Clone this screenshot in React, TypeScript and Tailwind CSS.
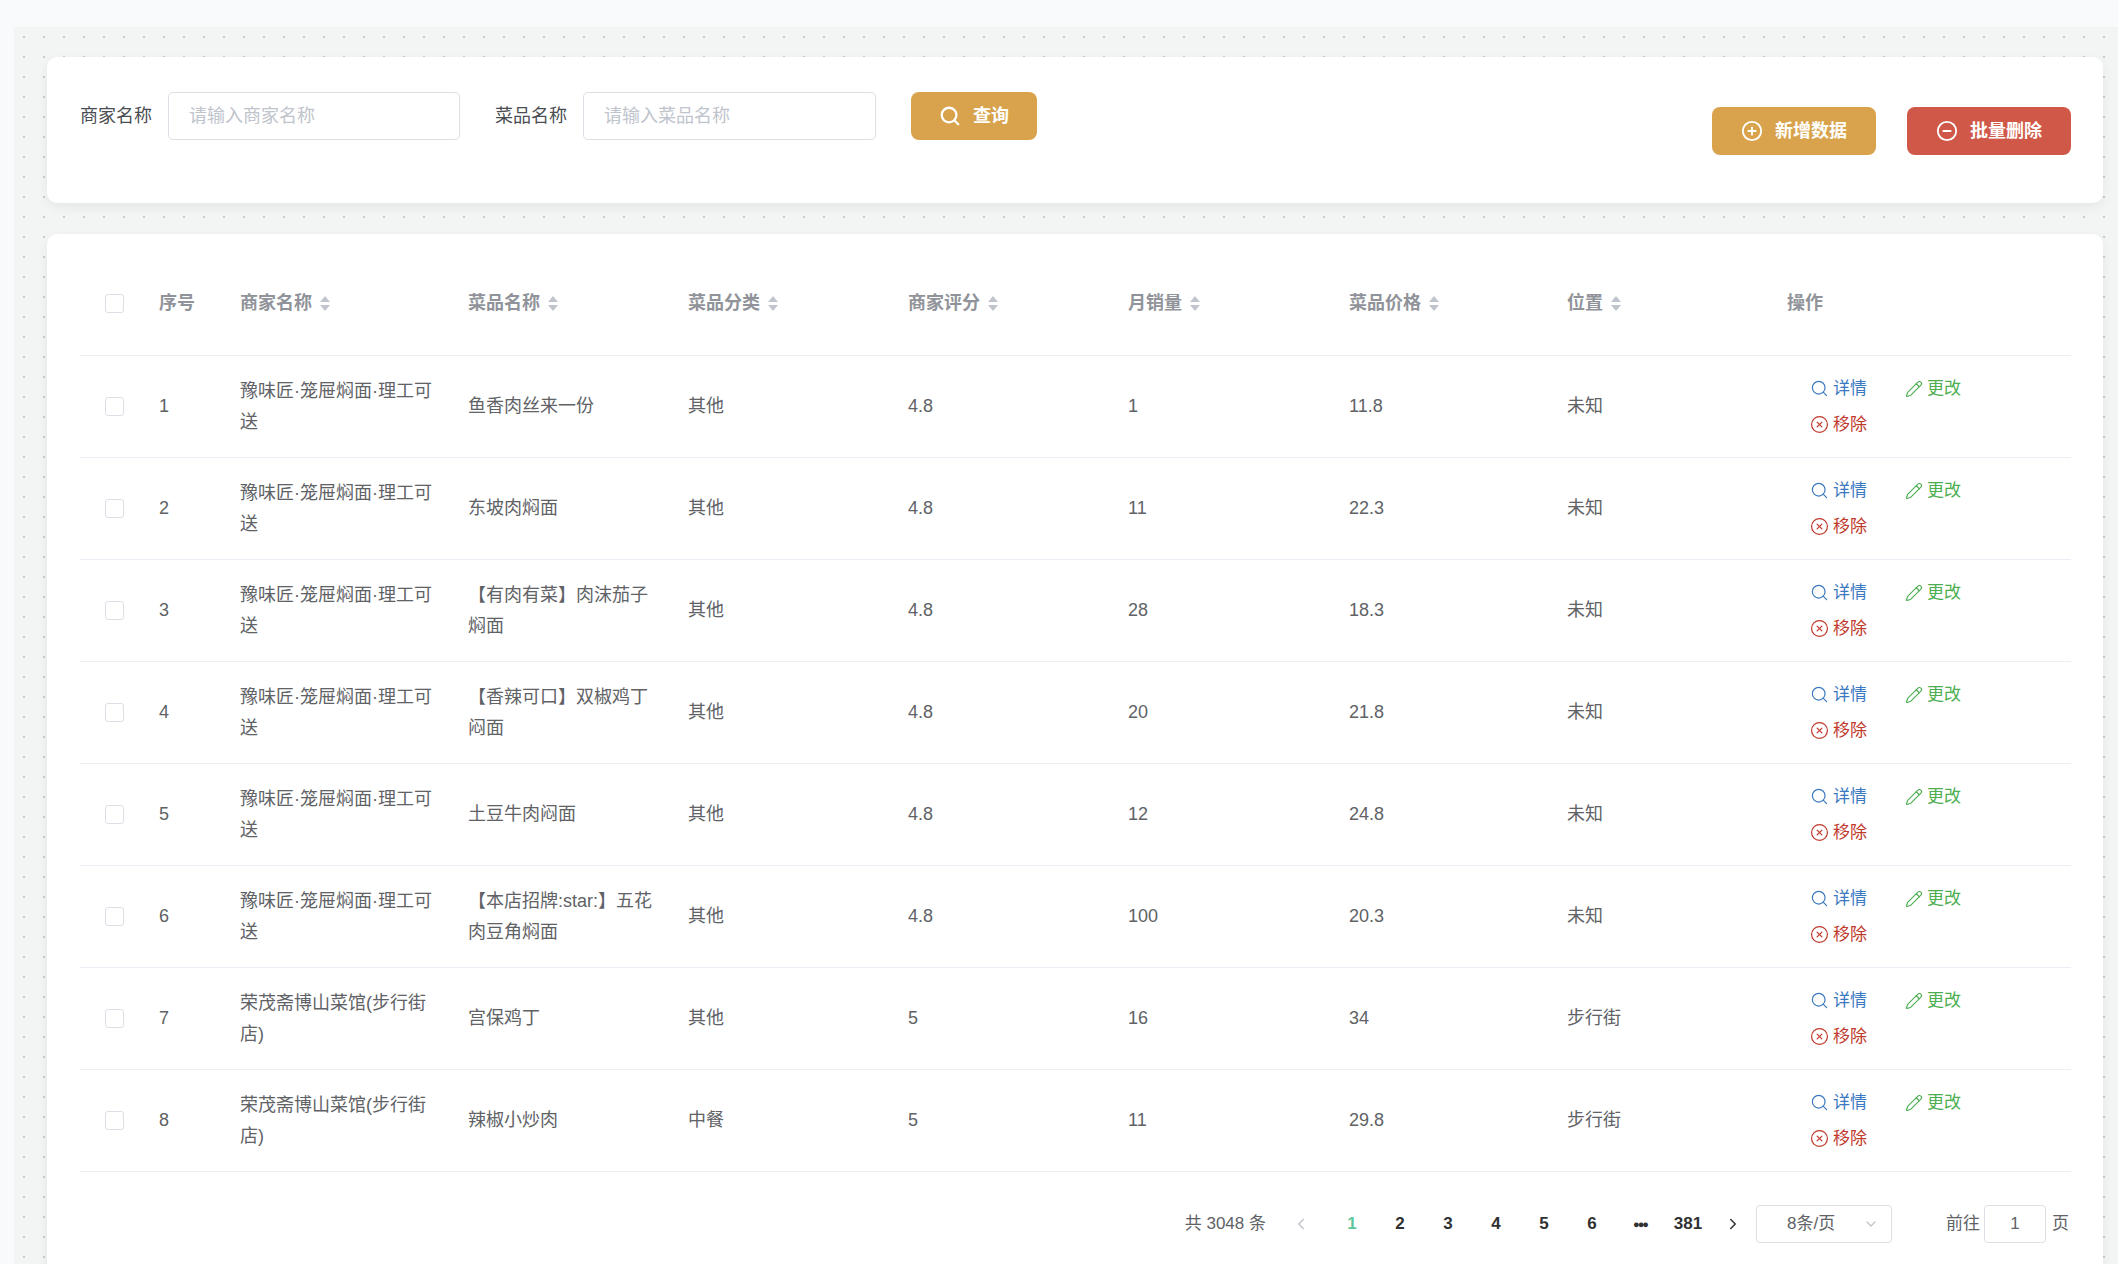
import { Search, CirclePlus, CircleMinus, CircleX, Pencil, ChevronLeft, ChevronRight, ChevronDown } from "lucide-react";

const rows = [
  { id: 1, shop: "豫味匠·笼屉焖面·理工可送", dish: "鱼香肉丝来一份", cat: "其他", score: "4.8", sales: "1", price: "11.8", loc: "未知" },
  { id: 2, shop: "豫味匠·笼屉焖面·理工可送", dish: "东坡肉焖面", cat: "其他", score: "4.8", sales: "11", price: "22.3", loc: "未知" },
  { id: 3, shop: "豫味匠·笼屉焖面·理工可送", dish: "【有肉有菜】肉沫茄子焖面", cat: "其他", score: "4.8", sales: "28", price: "18.3", loc: "未知" },
  { id: 4, shop: "豫味匠·笼屉焖面·理工可送", dish: "【香辣可口】双椒鸡丁闷面", cat: "其他", score: "4.8", sales: "20", price: "21.8", loc: "未知" },
  { id: 5, shop: "豫味匠·笼屉焖面·理工可送", dish: "土豆牛肉闷面", cat: "其他", score: "4.8", sales: "12", price: "24.8", loc: "未知" },
  { id: 6, shop: "豫味匠·笼屉焖面·理工可送", dish: "【本店招牌:star:】五花肉豆角焖面", cat: "其他", score: "4.8", sales: "100", price: "20.3", loc: "未知" },
  { id: 7, shop: "荣茂斋博山菜馆(步行街店)", dish: "宫保鸡丁", cat: "其他", score: "5", sales: "16", price: "34", loc: "步行街" },
  { id: 8, shop: "荣茂斋博山菜馆(步行街店)", dish: "辣椒小炒肉", cat: "中餐", score: "5", sales: "11", price: "29.8", loc: "步行街" },
];

const headers = [
  { t: "商家名称", w: "w-[228px]" },
  { t: "菜品名称", w: "w-[220px]" },
  { t: "菜品分类", w: "w-[220px]" },
  { t: "商家评分", w: "w-[220px]" },
  { t: "月销量", w: "w-[221px]" },
  { t: "菜品价格", w: "w-[218px]" },
  { t: "位置", w: "w-[220px]" },
];

function Sort() {
  return (
    <span className="inline-flex flex-col ml-2 gap-[3px]">
      <span className="w-0 h-0 border-x-[5px] border-x-transparent border-b-[6px] border-b-[#c0c4cc]" />
      <span className="w-0 h-0 border-x-[5px] border-x-transparent border-t-[6px] border-t-[#c0c4cc]" />
    </span>
  );
}

function Box() {
  return <span className="block w-[19px] h-[19px] border border-[#dcdfe6] rounded-[3px] bg-white" />;
}

export default function App() {
  return (
    <div className="w-[2118px] h-[1264px] bg-[#f8fafc] pt-[27px] pl-[14px] overflow-hidden text-[18px] text-[#606266]" style={{ fontFamily: '"Liberation Sans", "Noto Sans CJK SC", sans-serif' }}>
      <div className="h-full bg-[#f3f4f4] bg-[radial-gradient(#c8cccc_1px,transparent_1.2px)] bg-[length:20px_20px] pl-[33px] pr-[15px] pt-[30px]">
        {/* search card */}
        <div className="h-[146px] bg-white rounded-[10px] shadow-[0_4px_12px_rgba(0,0,0,0.06)] flex pl-[33px] pr-[32px]">
          <div className="flex items-center h-[48px] mt-[35px]">
            <span className="text-[#4a4d52] mr-4">商家名称</span>
            <div className="w-[292px] h-[48px] border border-[#dcdfe6] rounded-[5px] flex items-center px-5 text-[#c0c4cc]">请输入商家名称</div>
            <span className="text-[#4a4d52] ml-[35px] mr-4">菜品名称</span>
            <div className="w-[293px] h-[48px] border border-[#dcdfe6] rounded-[5px] flex items-center px-5 text-[#c0c4cc]">请输入菜品名称</div>
            <button className="ml-[35px] w-[126px] h-[48px] rounded-[8px] bg-[#d8a34c] text-white font-bold flex items-center justify-center gap-3">
              <Search size={22} strokeWidth={2.5} />查询
            </button>
          </div>
          <div className="ml-auto flex gap-[31px] pt-[50px]">
            <button className="w-[164px] h-[48px] rounded-[8px] bg-[#d8a34c] text-white font-bold flex items-center justify-center gap-3">
              <CirclePlus size={22} />新增数据
            </button>
            <button className="w-[164px] h-[48px] rounded-[8px] bg-[#d05848] text-white font-bold flex items-center justify-center gap-3">
              <CircleMinus size={22} />批量删除
            </button>
          </div>
        </div>

        {/* table card */}
        <div className="mt-[31px] h-[1100px] bg-white rounded-[10px] shadow-[0_4px_12px_rgba(0,0,0,0.06)] pl-[33px] pr-[32px] pt-[18px]">
          <div className="flex items-center h-[104px] border-b border-[#ebeef5] text-[#909399] font-bold">
            <div className="w-[79px] pl-[25px]"><Box /></div>
            <div className="w-[81px]">序号</div>
            {headers.map((h) => (
              <div key={h.t} className={`${h.w} flex items-center`}>{h.t}<Sort /></div>
            ))}
            <div>操作</div>
          </div>
          {rows.map((r) => (
            <div key={r.id} className="flex items-center h-[102px] border-b border-[#ebeef5] leading-[31px]">
              <div className="w-[79px] pl-[25px]"><Box /></div>
              <div className="w-[81px]">{r.id}</div>
              <div className="w-[228px] pr-[30px]">{r.shop}</div>
              <div className="w-[220px] pr-[28px]">{r.dish}</div>
              <div className="w-[220px]">{r.cat}</div>
              <div className="w-[220px]">{r.score}</div>
              <div className="w-[221px]">{r.sales}</div>
              <div className="w-[218px]">{r.price}</div>
              <div className="w-[220px]">{r.loc}</div>
              <div className="flex flex-col gap-[5px] pl-[23px] text-[17px] leading-[31px]">
                <div className="flex gap-[38px]">
                  <span className="flex items-center gap-1 text-[#3b78c0]"><Search size={19} strokeWidth={1.5} />详情</span>
                  <span className="flex items-center gap-1 text-[#4cae4f]"><Pencil size={18} strokeWidth={1.5} />更改</span>
                </div>
                <span className="flex items-center gap-1 text-[#c0392b]"><CircleX size={19} strokeWidth={1.5} />移除</span>
              </div>
            </div>
          ))}

          {/* pagination */}
          <div className="flex items-center justify-end h-[104px] text-[17px]">
            <span className="mr-[26px] text-[#606266]">共 3048 条</span>
            <ChevronLeft size={18} className="text-[#c0c4cc] mr-[18px]" />
            {["1", "2", "3", "4", "5", "6"].map((p) => (
              <span key={p} className={`w-[48px] text-center font-bold ${p === "1" ? "text-[#5cc79a]" : "text-[#303133]"}`}>{p}</span>
            ))}
            <span className="w-[48px] text-center font-bold text-[#303133] text-[11px] tracking-[-2px]">●●●</span>
            <span className="w-[48px] text-center font-bold text-[#303133]">381</span>
            <ChevronRight size={18} className="text-[#303133] ml-[12px] mr-[14px]" />
            <div className="w-[136px] h-[38px] border border-[#dcdfe6] rounded-[4px] flex items-center pl-[30px] pr-3 text-[#606266]">
              8条/页<ChevronDown size={16} className="ml-auto text-[#c0c4cc]" />
            </div>
            <span className="ml-[54px] mr-[4px]">前往</span>
            <div className="w-[62px] h-[38px] border border-[#dcdfe6] rounded-[4px] flex items-center justify-center">1</div>
            <span className="ml-[6px] mr-[2px]">页</span>
          </div>
        </div>
      </div>
    </div>
  );
}
